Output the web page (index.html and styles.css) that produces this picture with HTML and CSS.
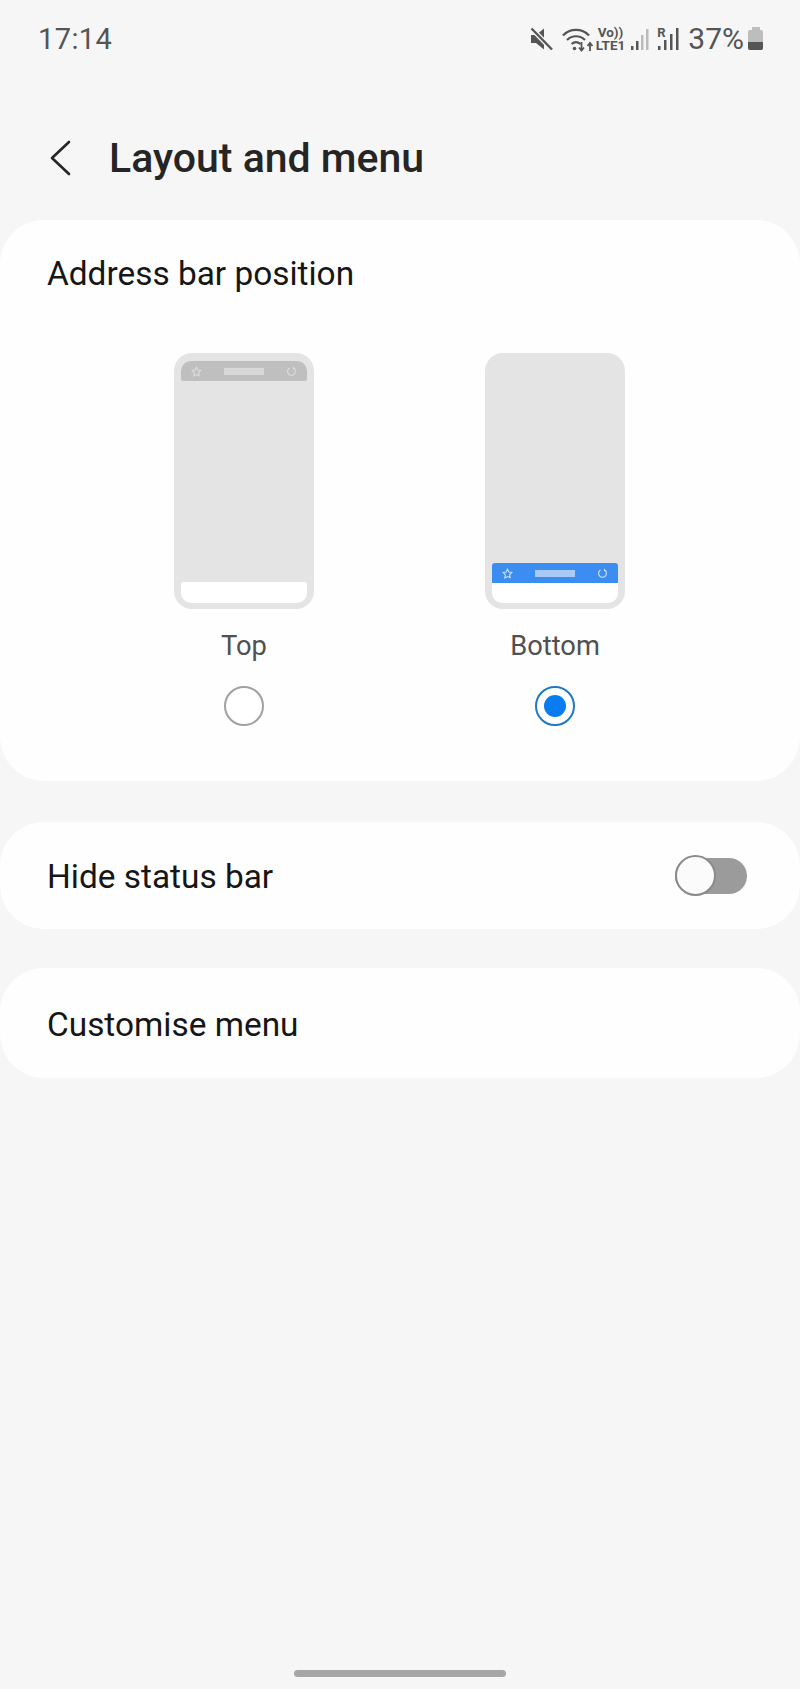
FILE: index.html
```html
<!DOCTYPE html>
<html lang="en">
<head>
    <meta charset="UTF-8">
    <meta name="viewport" content="width=device-width, initial-scale=1.0">
    <title>Layout and menu</title>
    <link rel="stylesheet" href="styles.css">
</head>
<body>
    <div class="status-bar">
        <span class="time">17:14</span>
        <div class="status-icons">
            <svg class="icon-mute" width="24" height="26" viewBox="0 0 24 26">
                <path d="M1 9h5l8-6.500v21L6 17H1z" fill="#555"/>
                <path d="M1.500 2.500L22 23.500" stroke="#f6f6f7" stroke-width="5"/>
                <path d="M1.500 2.500L22 23.500" stroke="#555" stroke-width="2.400"/>
            </svg>
            <svg class="icon-wifi" width="32" height="26" viewBox="0 0 32 26">
                <path d="M1 9.500C8 2 20 2 27 9.500M5 14c5-5 13-5 18 0M9.500 18c3-2.600 6-2.600 9 0" fill="none" stroke="#555" stroke-width="2.200"/>
                <circle cx="12.500" cy="22.500" r="1.800" fill="#555"/>
                <path d="M19.500 16v8M17 21.500l2.500 3 2.500-3M28 25v-8M25.500 20l2.500-3 2.500 3" fill="none" stroke="#555" stroke-width="1.800"/>
            </svg>
            <div class="volte">
                <span>Vo))</span>
                <span>LTE1</span>
            </div>
            <svg class="icon-signal" width="20" height="24" viewBox="0 0 20 24">
                <rect x="1" y="19" width="2.500" height="4" fill="#555"/>
                <rect x="6" y="14" width="2.500" height="9" fill="#555"/>
                <rect x="11" y="8" width="2.500" height="15" fill="#bbb"/>
                <rect x="16" y="2" width="2.500" height="21" fill="#bbb"/>
            </svg>
            <div class="signal-r">
                <span>R</span>
                <svg width="22" height="24" viewBox="0 0 22 24">
                    <rect x="1" y="19" width="2.500" height="4" fill="#555"/>
                    <rect x="7" y="13" width="2.500" height="10" fill="#555"/>
                    <rect x="13" y="7" width="2.500" height="16" fill="#555"/>
                    <rect x="19" y="1" width="2.500" height="22" fill="#555"/>
                </svg>
            </div>
            <span class="battery-pct">37%</span>
            <div class="battery">
                <div class="battery-cap"></div>
                <div class="battery-body"><div class="battery-level"></div></div>
            </div>
        </div>
    </div>

    <div class="app-bar">
        <svg class="back" width="22" height="36" viewBox="0 0 22 36">
            <path d="M20 2L3 18l17 16" fill="none" stroke="#252525" stroke-width="2.600" stroke-linecap="round" stroke-linejoin="round"/>
        </svg>
        <h1>Layout and menu</h1>
    </div>

    <div class="card address-card">
        <div class="card-title">Address bar position</div>
        <div class="options">
            <div class="option">
                <div class="phone">
                    <div class="mock-bar top">
                        <svg width="11" height="11" viewBox="0 0 14 14"><path d="M7 1.500l1.700 3.600 3.800.5-2.800 2.700.7 3.900L7 10.800l-3.400 1.900.7-3.900L1.500 5.600l3.800-.5z" fill="none" stroke="#dcdcdc" stroke-width="1.400"/></svg>
                        <div class="mock-url"></div>
                        <svg width="11" height="11" viewBox="0 0 14 14"><path d="M9.500 2.500a5 5 0 1 1-5 0M9.500 1v2.500H12" fill="none" stroke="#dcdcdc" stroke-width="1.400"/></svg>
                    </div>
                    <div class="mock-space"></div>
                    <div class="mock-nav"></div>
                </div>
                <div class="option-label">Top</div>
                <div class="radio"></div>
            </div>
            <div class="option">
                <div class="phone">
                    <div class="mock-space"></div>
                    <div class="mock-bar bottom">
                        <svg width="11" height="11" viewBox="0 0 14 14"><path d="M7 1.500l1.700 3.600 3.800.5-2.800 2.700.7 3.900L7 10.800l-3.400 1.900.7-3.900L1.500 5.600l3.800-.5z" fill="none" stroke="#cfe2fb" stroke-width="1.400"/></svg>
                        <div class="mock-url"></div>
                        <svg width="11" height="11" viewBox="0 0 14 14"><path d="M9.500 2.500a5 5 0 1 1-5 0M9.500 1v2.500H12" fill="none" stroke="#cfe2fb" stroke-width="1.400"/></svg>
                    </div>
                    <div class="mock-nav joined"></div>
                </div>
                <div class="option-label">Bottom</div>
                <div class="radio checked"><div class="radio-dot"></div></div>
            </div>
        </div>
    </div>

    <div class="card row-card">
        <span>Hide status bar</span>
        <div class="switch">
            <div class="switch-knob"></div>
        </div>
    </div>

    <div class="card row-card menu-card">
        <span>Customise menu</span>
    </div>

    <div class="home-bar"></div>
</body>
</html>
```

FILE: styles.css
```css
* {
    box-sizing: border-box;
    margin: 0;
    padding: 0;
}

html, body {
    height: 100%;
    overflow: hidden;
}

body {
    display: flex;
    flex-direction: column;
    background: #f6f6f7;
    font-family: Roboto, "Liberation Sans", sans-serif;
    color: #161616;
}

.status-bar {
    display: flex;
    align-items: center;
    justify-content: space-between;
    height: 76px;
    padding: 1px 37px 0 38px;
    color: #555;
}

.time {
    font-size: 29px;
    letter-spacing: 0.4px;
}

.status-icons {
    display: flex;
    align-items: center;
}

.icon-mute {
    margin-right: 8px;
}

.volte {
    display: flex;
    flex-direction: column;
    align-items: center;
    margin-left: 2px;
    font-size: 13.500px;
    font-weight: 700;
    line-height: 13px;
}

.icon-signal {
    margin-left: 5px;
}

.signal-r {
    display: flex;
    align-items: flex-end;
    margin-left: 7px;
}

.signal-r span {
    align-self: flex-start;
    width: 0;
    font-size: 13px;
    font-weight: 700;
    line-height: 11px;
}

.battery-pct {
    margin-left: 9px;
    font-size: 30px;
}

.battery {
    display: flex;
    flex-direction: column;
    align-items: center;
    margin-left: 4px;
}

.battery-cap {
    width: 8px;
    height: 3px;
    background: #bdbdbd;
}

.battery-body {
    display: flex;
    flex-direction: column;
    justify-content: flex-end;
    width: 15px;
    height: 20px;
    background: #bdbdbd;
    border-radius: 2px;
    overflow: hidden;
}

.battery-level {
    height: 8px;
    background: #555;
}

.app-bar {
    display: flex;
    align-items: center;
    height: 144px;
    padding: 19px 0 0 49px;
}

h1 {
    margin-left: 38px;
    font-size: 41px;
    font-weight: 500;
    color: #252525;
}

.card {
    background: #fefefe;
    border-radius: 44px;
}

.address-card {
    height: 561px;
    padding-left: 47px;
}

.card-title {
    padding-top: 35px;
    font-size: 33.400px;
    line-height: 38px;
}

.options {
    display: flex;
    margin-top: 60px;
    padding-left: 127px;
    gap: 171px;
}

.option {
    display: flex;
    flex-direction: column;
    align-items: center;
    width: 140px;
}

.phone {
    display: flex;
    flex-direction: column;
    width: 140px;
    height: 256px;
    padding: 8px 7px 6px;
    background: #e4e4e4;
    border-radius: 18px;
}

.mock-bar {
    display: flex;
    align-items: center;
    justify-content: space-between;
    height: 20px;
    padding: 0 10px;
}

.mock-bar.top {
    background: #bfbfbf;
    border-radius: 10px 10px 2px 2px;
}

.mock-bar.bottom {
    background: #3c8df2;
    border-radius: 3px 3px 0 0;
}

.mock-url {
    width: 40px;
    height: 7px;
    background: #d8d8d8;
}

.mock-bar.bottom .mock-url {
    background: #a9c9f6;
}

.mock-space {
    flex: 1;
}

.mock-nav {
    height: 21px;
    background: #fff;
    border-radius: 2px 2px 10px 10px;
}

.mock-nav.joined {
    height: 20px;
    border-radius: 0 0 10px 10px;
}

.option-label {
    margin-top: 21px;
    font-size: 27.300px;
    line-height: 32px;
    color: #505050;
}

.radio {
    display: flex;
    align-items: center;
    justify-content: center;
    width: 40px;
    height: 40px;
    margin-top: 24px;
    background: #fff;
    border: 2px solid #a0a0a0;
    border-radius: 50%;
}

.radio.checked {
    border-color: #1f78c4;
}

.radio-dot {
    width: 22px;
    height: 22px;
    background: #0a7cf2;
    border-radius: 50%;
}

.row-card {
    display: flex;
    align-items: center;
    justify-content: space-between;
    height: 107px;
    margin-top: 41px;
    padding: 0 53px 0 47px;
    font-size: 33.400px;
}

.row-card span {
    padding-top: 2px;
}

.menu-card {
    height: 110px;
    margin-top: 39px;
}

.switch {
    display: flex;
    align-items: center;
    width: 72px;
    height: 36px;
    background: #9b9b9b;
    border-radius: 18px;
}

.switch-knob {
    width: 41px;
    height: 41px;
    background: #fbfbfb;
    border: 2px solid #8a8a8a;
    border-radius: 50%;
}

.home-bar {
    align-self: center;
    width: 212px;
    height: 7px;
    margin-top: auto;
    margin-bottom: 12px;
    background: #a6a6a6;
    border-radius: 4px;
}
```
